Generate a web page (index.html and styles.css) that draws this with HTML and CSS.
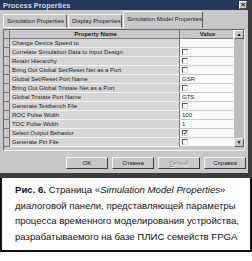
FILE: index.html
```html
<!DOCTYPE html>
<html lang="ru">

<head>
    <meta charset="UTF-8">
    <title>Process Properties</title>
    <link rel="stylesheet" href="styles.css">
</head>

<body>
    <div id="dialog">
        <div id="titlebar">
            <span id="title">Process Properties</span>
            <span id="close">×</span>
        </div>
        <div id="tabs">
            <div class="tab">Simulation Properties</div>
            <div class="tab">Display Properties</div>
            <div class="tab active">Simulation Model Properties</div>
        </div>
        <div id="page">
            <div id="grid">
                <div id="cols">
                    <div class="row head">
                        <div class="rh"></div>
                        <div class="name">Property Name</div>
                        <div class="value">Value</div>
                    </div>
                    <div class="row">
                        <div class="rh"></div>
                        <div class="name">Change Device Speed to</div>
                        <div class="value"></div>
                    </div>
                    <div class="row">
                        <div class="rh"></div>
                        <div class="name">Correlate Simulation Data to Input Design</div>
                        <div class="value"><span class="check"></span></div>
                    </div>
                    <div class="row">
                        <div class="rh"></div>
                        <div class="name">Retain Hierarchy</div>
                        <div class="value"><span class="check"></span></div>
                    </div>
                    <div class="row">
                        <div class="rh"></div>
                        <div class="name">Bring Out Global Set/Reset Net as a Port</div>
                        <div class="value"><span class="check"></span></div>
                    </div>
                    <div class="row">
                        <div class="rh"></div>
                        <div class="name">Global Set/Reset Port Name</div>
                        <div class="value">GSR</div>
                    </div>
                    <div class="row">
                        <div class="rh"></div>
                        <div class="name">Bring Out Global Tristate Net as a Port</div>
                        <div class="value"><span class="check"></span></div>
                    </div>
                    <div class="row">
                        <div class="rh"></div>
                        <div class="name">Global Tristate Port Name</div>
                        <div class="value">GTS</div>
                    </div>
                    <div class="row">
                        <div class="rh"></div>
                        <div class="name">Generate Testbench File</div>
                        <div class="value"><span class="check"></span></div>
                    </div>
                    <div class="row">
                        <div class="rh"></div>
                        <div class="name">ROC Pulse Width</div>
                        <div class="value">100</div>
                    </div>
                    <div class="row">
                        <div class="rh"></div>
                        <div class="name">TOC Pulse Width</div>
                        <div class="value">1</div>
                    </div>
                    <div class="row">
                        <div class="rh"></div>
                        <div class="name">Select Output Behavior</div>
                        <div class="value"><span class="check on">✓</span></div>
                    </div>
                    <div class="row">
                        <div class="rh"></div>
                        <div class="name">Generate Pin File</div>
                        <div class="value"><span class="check"></span></div>
                    </div>
                </div>
                <div id="scroll">
                    <div class="arrow">▲</div>
                    <div class="track"></div>
                    <div class="arrow">▼</div>
                </div>
            </div>
        </div>
        <div id="buttons">
            <div class="btn">OK</div>
            <div class="btn">Отмена</div>
            <div class="btn off"><u>D</u>efault</div>
            <div class="btn">Справка</div>
        </div>
    </div>
    <div id="caption">
        <p><b>Рис. 6.</b> Страница «<i>Simulation Model Properties</i>»<br>диалоговой панели, представляющей параметры<br>процесса временного моделирования устройства,<br>разрабатываемого на базе ПЛИС семейств FPGA</p>
    </div>
</body>

</html>
```

FILE: styles.css
```css
* {
    box-sizing: border-box;
}

body {
    margin: 0;
    width: 252px;
    height: 261px;
    overflow: hidden;
    background: white;
    font-family: "Liberation Sans", Arial, sans-serif;
}

#dialog {
    width: 252px;
    height: 178px;
    background: #c8c8c8;
    border-right: 4px solid #3c3c3c;
    border-bottom: 5px solid #3c3c3c;
    font-size: 6px;
    color: #1c1c1c;
}

#titlebar {
    height: 10px;
    background: #23375f;
    display: flex;
    align-items: center;
    justify-content: space-between;
    padding: 0 1px 0 3px;
}

#title {
    font-size: 7.4px;
    font-weight: bold;
    color: #d6d6de;
}

#close {
    width: 8px;
    height: 8px;
    background: #c8c8c8;
    border: 1px solid;
    border-color: #fff #555 #555 #fff;
    font-size: 8px;
    line-height: 5px;
    text-align: center;
    font-weight: bold;
}

#tabs {
    display: flex;
    align-items: flex-end;
    height: 18px;
    padding-left: 3px;
}

.tab {
    height: 14px;
    padding: 0 3px;
    line-height: 13px;
    border: 1px solid;
    border-color: #f4f4f4 #5a5a5a transparent #f4f4f4;
    border-bottom: 1px solid #f4f4f4;
    border-radius: 2px 2px 0 0;
    margin-right: 1px;
    white-space: nowrap;
}

.tab:nth-child(1) {
    width: 64px;
}

.tab:nth-child(2) {
    width: 54px;
}

.tab.active {
    width: 80px;
    height: 17px;
    line-height: 15px;
    border-bottom-color: #c8c8c8;
}

#page {
    padding: 1px 0 0 3px;
    height: 125px;
}

#grid {
    width: 242px;
    display: flex;
    border: 1px solid;
    border-color: #6a6a6a #f4f4f4 #f4f4f4 #6a6a6a;
    padding-bottom: 3px;
}

#cols {
    width: 229px;
}

.row {
    display: flex;
    height: 9px;
    line-height: 8px;
}

.rh {
    width: 6px;
    background: #c8c8c8;
    border-right: 1px solid #7a7a7a;
    border-bottom: 1px solid #7a7a7a;
}

.name {
    width: 170px;
    padding-left: 2px;
    background: #d6d6d6;
    border-right: 1px solid #7a7a7a;
    border-bottom: 1px solid #f2f2f2;
    white-space: nowrap;
}

.value {
    width: 53px;
    padding-left: 2px;
    background: #fbfbfb;
    border-bottom: 1px solid #c8c8c8;
    display: flex;
    align-items: center;
}

.head .name,
.head .value {
    background: #c8c8c8;
    font-weight: bold;
    text-align: center;
    justify-content: center;
    border-bottom: 1px solid #7a7a7a;
}

.check {
    width: 6px;
    height: 6px;
    border: 1px solid;
    border-color: #555 #ddd #ddd #555;
    background: white;
    font-size: 6px;
    line-height: 4px;
    text-align: center;
    font-weight: bold;
}

#scroll {
    width: 11px;
    display: flex;
    flex-direction: column;
    background: #bcbcbc;
    border-left: 1px solid #f4f4f4;
}

.arrow {
    height: 9px;
    background: #c8c8c8;
    border: 1px solid;
    border-color: #f4f4f4 #555 #555 #f4f4f4;
    font-size: 5px;
    line-height: 7px;
    text-align: center;
}

.track {
    height: 99px;
}

#buttons {
    display: flex;
    gap: 4px;
    padding: 4px 0 0 66px;
}

.btn {
    width: 42px;
    height: 12px;
    border: 1px solid;
    border-color: #f4f4f4 #3a3a3a #3a3a3a #f4f4f4;
    text-align: center;
    line-height: 10px;
}

.btn.off {
    color: #8a8a8a;
    text-shadow: 1px 1px 0 #f4f4f4;
}

#caption {
    height: 74px;
    border: 2px solid #111;
    border-top: none;
    padding: 4px 0 0 13px;
}

#caption p {
    margin: 0;
    font-size: 9.6px;
    line-height: 15.5px;
    color: #111;
    white-space: nowrap;
}
```
